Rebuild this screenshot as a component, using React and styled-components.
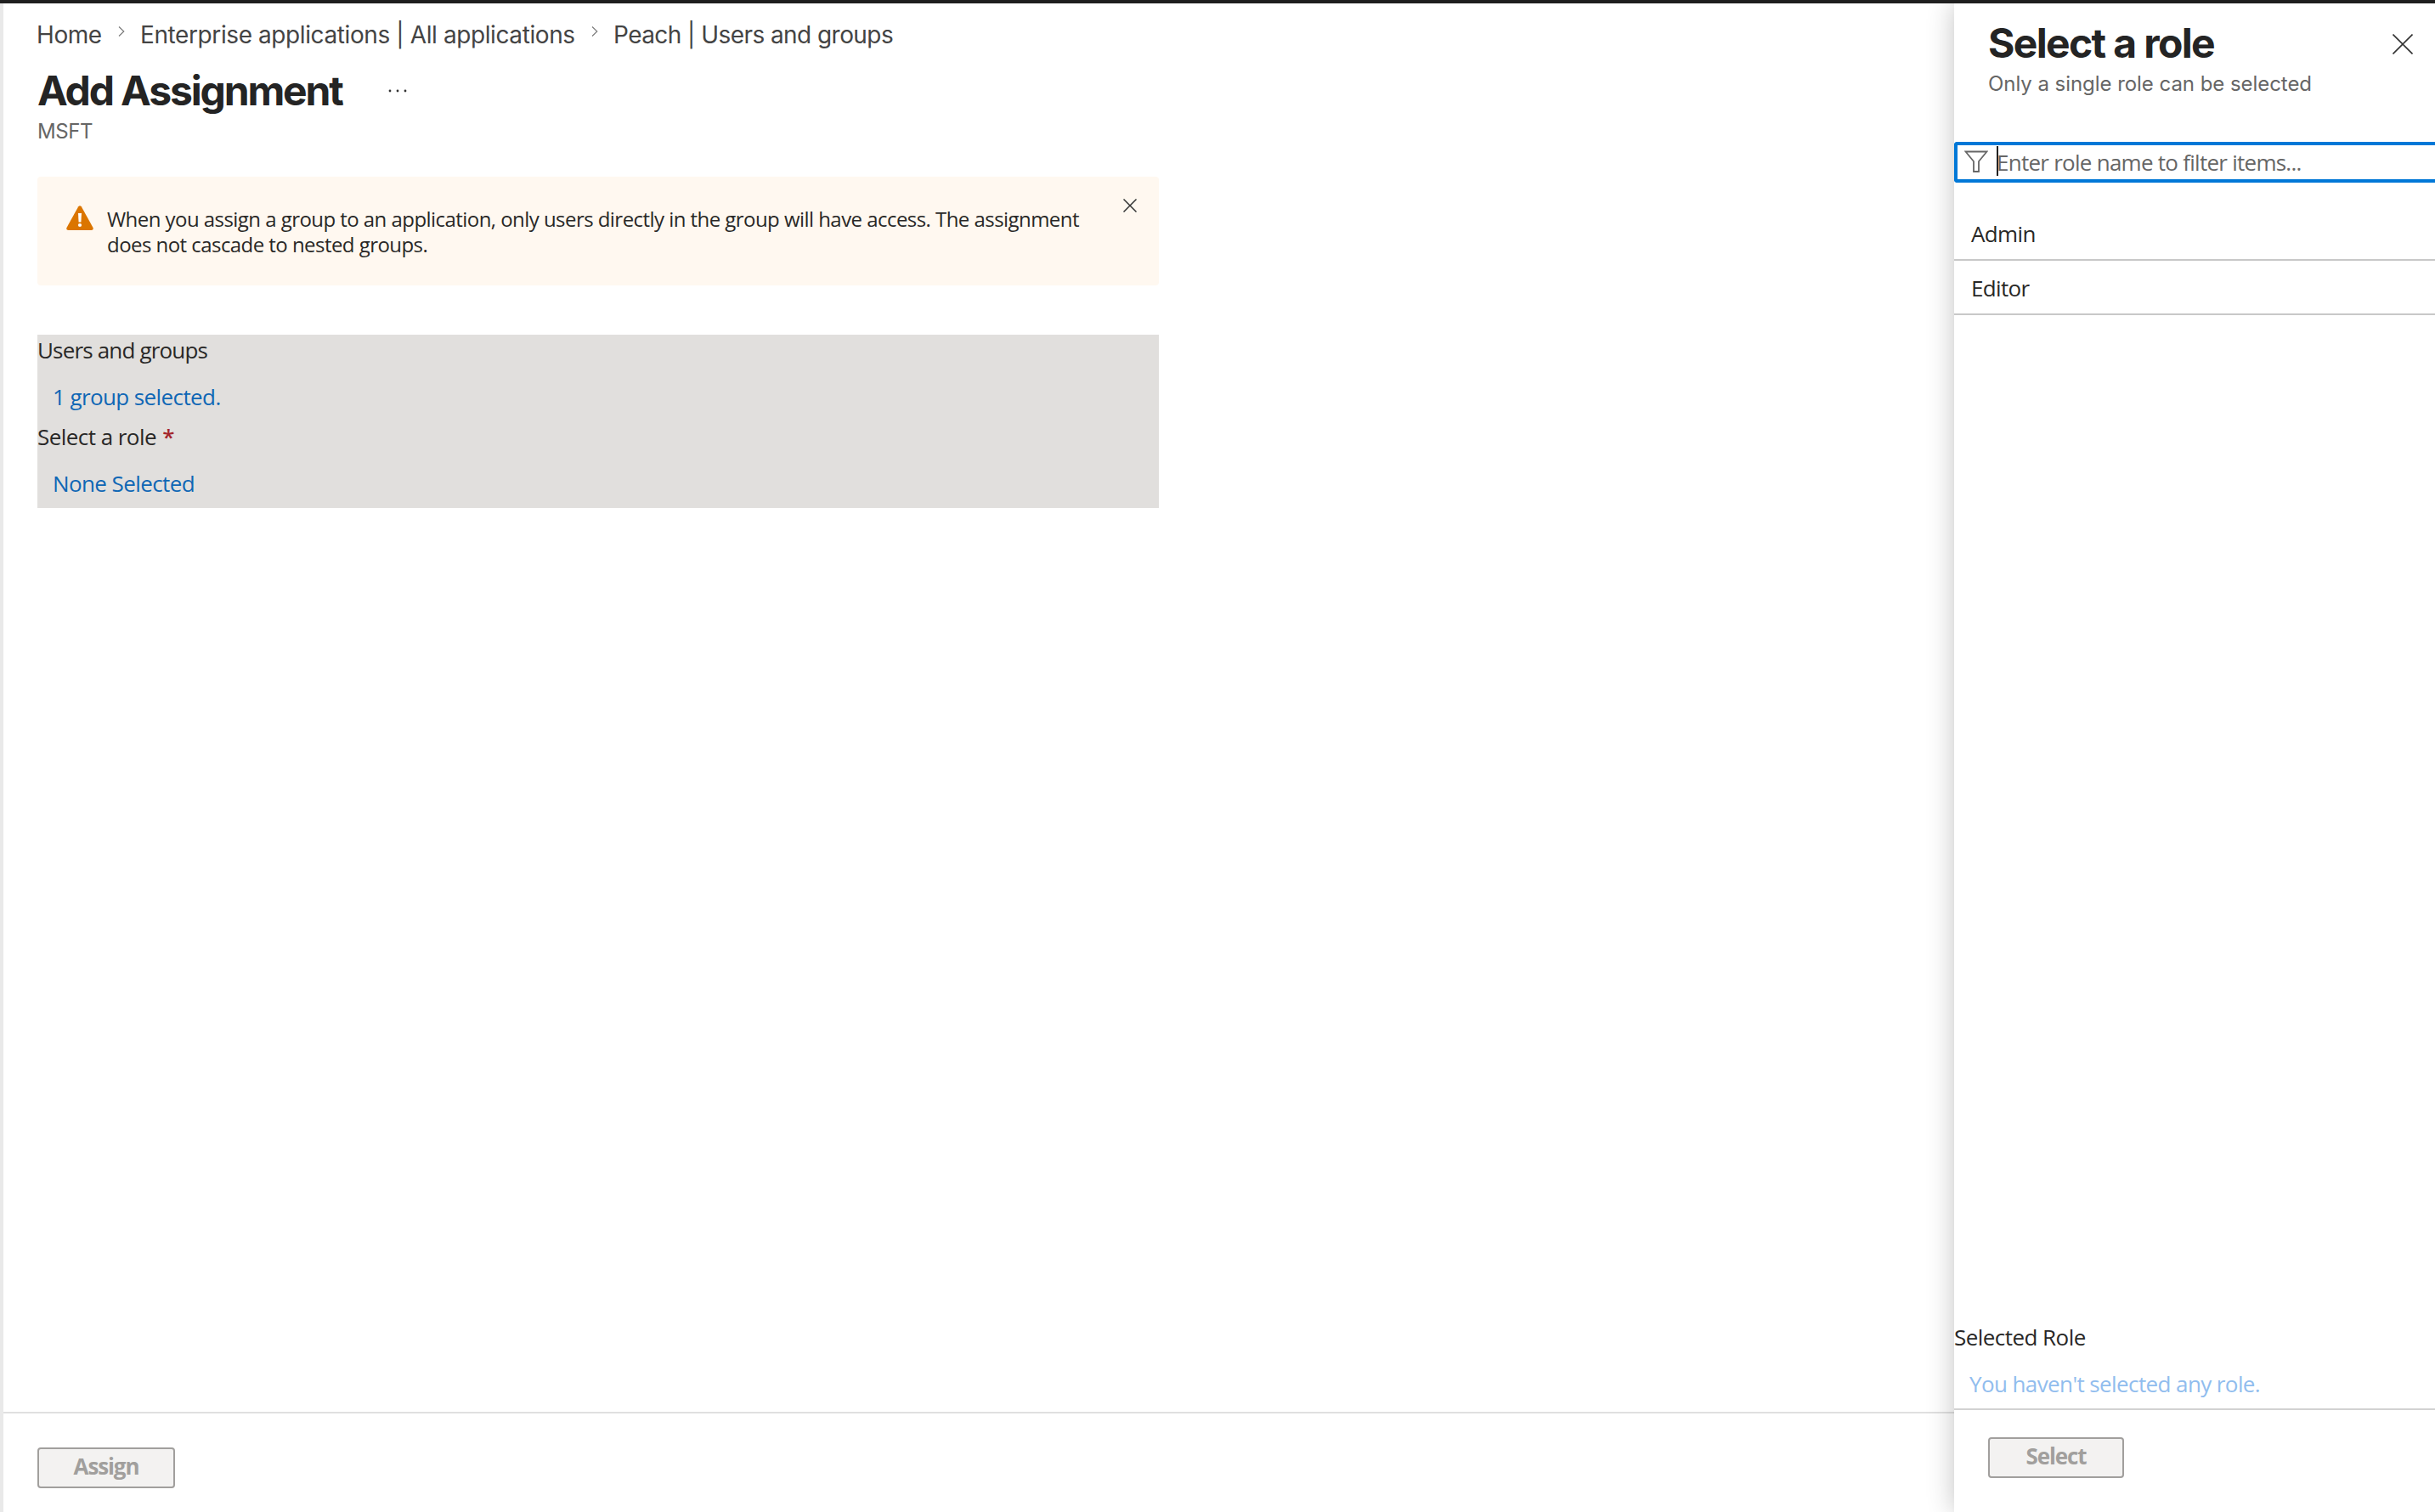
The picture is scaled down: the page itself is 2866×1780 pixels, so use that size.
import React from 'react';
import styled, { createGlobalStyle } from 'styled-components';

const GlobalStyle = createGlobalStyle`
  * {
    box-sizing: border-box;
  }

  body {
    margin: 0;
    background: #fff;
    color: #292827;
    font-family: 'Open Sans', 'Noto Sans', sans-serif;
    font-size: 26px;
    line-height: 36px;
    overflow: hidden;
  }
`;

const Page = styled.div`
  display: flex;
  width: 2866px;
  height: 1780px;
  border-top: 4px solid #1f1f1f;
`;

// Main blade
const Blade = styled.main`
  flex: 1;
  display: flex;
  flex-direction: column;
  border-left: 4px solid #e9e9e9;
`;

const BladeBody = styled.div`
  flex: 1;
  padding: 19px 40px 0;
`;

const Breadcrumb = styled.nav`
  display: flex;
  margin-left: -1px;
  font-family: Inter, sans-serif;
  font-size: 28px;
  color: #444;
`;

const Crumb = styled.span`
  width: ${props => props.$width}px;
  letter-spacing: ${props => props.$spacing || 0}px;
  white-space: nowrap;
`;

const CrumbChevron = styled.svg`
  width: 8px;
  height: 12px;
  margin: 8px 18px 0 18px;
`;

const TitleRow = styled.div`
  display: flex;
  align-items: center;
  margin-top: 18px;
`;

const Title = styled.h1`
  margin: 0;
  font-family: Inter, sans-serif;
  font-size: 48px;
  font-weight: 700;
  line-height: 60px;
  letter-spacing: ${props => props.$spacing}px;
  color: #242424;
  white-space: nowrap;
`;

const MoreDots = styled.svg`
  width: 24px;
  height: 4px;
  margin-left: 54px;
`;

const Subtitle = styled.div`
  margin-top: 3px;
  font-family: Inter, sans-serif;
  font-size: 24px;
  line-height: 30px;
  letter-spacing: ${props => props.$spacing || 0}px;
  color: #666;
`;

const Banner = styled.div`
  display: flex;
  align-items: flex-start;
  width: 1320px;
  height: 128px;
  margin-top: 38px;
  padding: 35px 26px 0 34px;
  border-radius: 4px;
  background: #fff8f0;
`;

const WarningIcon = styled.svg`
  flex: none;
  width: 32px;
  height: 29px;
  margin: -1px 16px 0 0;
`;

const BannerText = styled.p`
  flex: 1;
  margin: 0;
  font-size: 24px;
  line-height: 30px;
  letter-spacing: -0.55px;
  white-space: nowrap;
`;

const BannerClose = styled.svg`
  flex: none;
  width: 16px;
  height: 16px;
  margin-top: -9px;
`;

const Selection = styled.section`
  width: 1320px;
  margin-top: 58px;
  background: #e1dfdd;
`;

const FieldLabel = styled.div`
  height: 55px;
  letter-spacing: ${props => props.$spacing || -0.55}px;
`;

const Required = styled.span`
  margin-left: 1px;
  color: #a4262c;
  font-weight: 600;
`;

const FieldLink = styled.div`
  height: 47px;
  padding-left: 18px;
  letter-spacing: -0.6px;
  color: ${props => (props.$disabled ? '#91bdee' : '#0f67b5')};
`;

const Footer = styled.footer`
  height: ${props => props.$height}px;
  padding: ${props => props.$padding};
  border-top: 2px solid ${props => props.$line};
`;

const Button = styled.button`
  display: block;
  width: ${props => props.$width}px;
  height: 48px;
  padding: 0 0 4px;
  border: 2px solid #a19f9d;
  border-radius: 4px;
  background: #f3f2f1;
  color: #a19f9d;
  font-family: inherit;
  font-size: 26px;
  font-weight: 700;
  line-height: 40px;
  letter-spacing: -1.1px;
`;

// Role picker on the right
const Panel = styled.aside`
  position: relative;
  display: flex;
  flex-direction: column;
  width: 566px;
  background: #fff;
  box-shadow: 0 0 30px rgba(0, 0, 0, 0.24);
  clip-path: inset(0 0 0 -60px);
`;

const PanelHeader = styled.header`
  display: flex;
  justify-content: space-between;
  height: 163px;
  padding: 17px 26px 0 40px;
`;

const PanelClose = styled.svg`
  width: 24px;
  height: 24px;
  margin-top: 19px;
`;

const FilterBox = styled.div`
  display: flex;
  align-items: center;
  height: 48px;
  border: 4px solid #0078d7;
  border-right: 0;
  border-radius: 4px 0 0 4px;
  color: #666;
  letter-spacing: -0.74px;
`;

const FilterIcon = styled.svg`
  width: 28px;
  height: 26px;
  margin: 0 10px 3px 8px;
`;

const Caret = styled.span`
  width: 2px;
  height: 35px;
  margin: 0 -2px 3px 0;
  background: #222;
`;

const RoleList = styled.ul`
  flex: 1;
  margin: 28px 0 0;
  padding: 0;
  list-style: none;
`;

const RoleItem = styled.li`
  height: 64px;
  padding: 14px 20px 0;
  border-bottom: 2px solid #c8c8c8;
  letter-spacing: -0.65px;
`;

const roles = ['Admin', 'Editor'];

const Chevron = () => (
  <CrumbChevron viewBox="0 0 8 12" fill="none" stroke="#777" strokeWidth="1.1">
    <path d="M1 .5 6.8 6 1 11.5" />
  </CrumbChevron>
);

const App = () => (
  <>
    <GlobalStyle />
    <Page>
      <Blade>
        <BladeBody>
          <Breadcrumb>
            <Crumb $width={78} $spacing={-0.42}>Home</Crumb>
            <Chevron />
            <Crumb $width={513} $spacing={-0.4}>Enterprise applications | All applications</Crumb>
            <Chevron />
            <Crumb $spacing={-0.56}>Peach | Users and groups</Crumb>
          </Breadcrumb>
          <TitleRow>
            <Title $spacing={-2.15}>Add Assignment</Title>
            <MoreDots viewBox="0 0 24 4" fill="#333">
              <circle cx="2" cy="2" r="1.4" />
              <circle cx="11" cy="2" r="1.4" />
              <circle cx="20" cy="2" r="1.4" />
            </MoreDots>
          </TitleRow>
          <Subtitle $spacing={-0.4}>MSFT</Subtitle>

          <Banner>
            <WarningIcon viewBox="0 0 32 29">
              <path
                d="M14.2 1.2Q16-.9 17.8 1.2L31.5 26Q32.3 28.8 29.6 29H2.4Q-.3 28.8.5 26Z"
                fill="#db7500"
              />
              <path d="M14 9h4l-.6 10.5h-2.8Z" fill="#fff" />
              <circle cx="16" cy="23" r="2.1" fill="#fff" />
            </WarningIcon>
            <BannerText>
              When you assign a group to an application, only users directly in the group will have access. The assignment
              <br />
              does not cascade to nested groups.
            </BannerText>
            <BannerClose viewBox="0 0 16 16" stroke="#333" strokeWidth="1.5">
              <path d="M.5.5l15 15M15.5.5l-15 15" />
            </BannerClose>
          </Banner>

          <Selection>
            <FieldLabel $spacing={-0.83}>Users and groups</FieldLabel>
            <FieldLink>1 group selected.</FieldLink>
            <FieldLabel>
              Select a role <Required>*</Required>
            </FieldLabel>
            <FieldLink>None Selected</FieldLink>
          </Selection>
        </BladeBody>
        <Footer $height={118} $padding="40px 40px 0" $line="#e0e0e0">
          <Button $width={162}>Assign</Button>
        </Footer>
      </Blade>

      <Panel>
        <PanelHeader>
          <div>
            <Title $spacing={-1.65}>Select a role</Title>
            <Subtitle $spacing={-0.05}>Only a single role can be selected</Subtitle>
          </div>
          <PanelClose viewBox="0 0 24 24" stroke="#333" strokeWidth="1.6">
            <path d="M.5.5l23 23M23.5.5l-23 23" />
          </PanelClose>
        </PanelHeader>
        <FilterBox>
          <FilterIcon viewBox="0 0 28 26" fill="none" stroke="#666" strokeWidth="1.8">
            <path d="M1.5 1.5h25L17 13v12h-6V13Z" />
          </FilterIcon>
          <Caret />
          <span>Enter role name to filter items...</span>
        </FilterBox>
        <RoleList>
          {roles.map(role => (
            <RoleItem key={role}>{role}</RoleItem>
          ))}
        </RoleList>
        <FieldLabel>Selected Role</FieldLabel>
        <FieldLink $disabled>You haven't selected any role.</FieldLink>
        <Footer $height={122} $padding="32px 40px 0" $line="#d2d2d2">
          <Button $width={160}>Select</Button>
        </Footer>
      </Panel>
    </Page>
  </>
);

export default App;
